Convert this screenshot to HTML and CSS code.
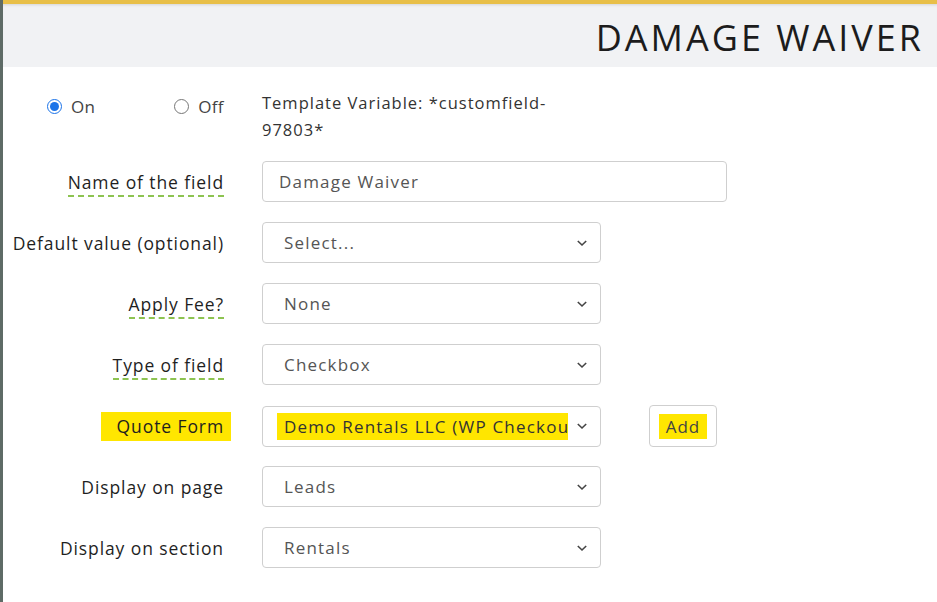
FILE: index.html
```html
<!DOCTYPE html>
<html>
<head>
  <meta charset="UTF-8">
  <title>Damage Waiver</title>
  <link rel="stylesheet" href="styles.css">
</head>
<body>
  <div class="page">
    <div class="topbar"></div>
    <div class="header">
      <h1>DAMAGE WAIVER</h1>
    </div>

    <div class="form">
      <div class="row row-top">
        <div class="status">
          <label class="radio"><input type="radio" name="status" checked> On</label>
          <label class="radio"><input type="radio" name="status"> Off</label>
        </div>
        <div class="template-var">Template Variable: *customfield-97803*</div>
      </div>

      <div class="row">
        <div class="label"><span class="hint">Name of the field</span></div>
        <div class="input wide">Damage Waiver</div>
      </div>

      <div class="row">
        <div class="label">Default value (optional)</div>
        <div class="select">
          <span class="value">Select...</span>
          <svg class="chevron" width="12" height="8" viewBox="0 0 12 8"><path d="M1.8 2 L6 6 L10.2 2" fill="none" stroke="#444" stroke-width="1.6"/></svg>
        </div>
      </div>

      <div class="row">
        <div class="label"><span class="hint">Apply Fee?</span></div>
        <div class="select">
          <span class="value">None</span>
          <svg class="chevron" width="12" height="8" viewBox="0 0 12 8"><path d="M1.8 2 L6 6 L10.2 2" fill="none" stroke="#444" stroke-width="1.6"/></svg>
        </div>
      </div>

      <div class="row">
        <div class="label"><span class="hint">Type of field</span></div>
        <div class="select">
          <span class="value">Checkbox</span>
          <svg class="chevron" width="12" height="8" viewBox="0 0 12 8"><path d="M1.8 2 L6 6 L10.2 2" fill="none" stroke="#444" stroke-width="1.6"/></svg>
        </div>
      </div>

      <div class="row">
        <div class="label"><span class="mark mark-label">Quote Form</span></div>
        <div class="control-group">
          <div class="select">
            <span class="value mark mark-value">Demo Rentals LLC (WP Checkout)</span>
            <svg class="chevron" width="12" height="8" viewBox="0 0 12 8"><path d="M1.8 2 L6 6 L10.2 2" fill="none" stroke="#444" stroke-width="1.6"/></svg>
          </div>
          <button class="btn-add"><span class="mark">Add</span></button>
        </div>
      </div>

      <div class="row">
        <div class="label">Display on page</div>
        <div class="select">
          <span class="value">Leads</span>
          <svg class="chevron" width="12" height="8" viewBox="0 0 12 8"><path d="M1.8 2 L6 6 L10.2 2" fill="none" stroke="#444" stroke-width="1.6"/></svg>
        </div>
      </div>

      <div class="row">
        <div class="label">Display on section</div>
        <div class="select">
          <span class="value">Rentals</span>
          <svg class="chevron" width="12" height="8" viewBox="0 0 12 8"><path d="M1.8 2 L6 6 L10.2 2" fill="none" stroke="#444" stroke-width="1.6"/></svg>
        </div>
      </div>
    </div>
  </div>
</body>
</html>
```

FILE: styles.css
```css
* {
  margin: 0;
  padding: 0;
  box-sizing: border-box;
}

body {
  font-family: "Open Sans", "Noto Sans", Arial, sans-serif;
  background: white;
  color: #222;
  height: 100vh;
  overflow: hidden;
}

.page {
  height: 100vh;
  border-left: 3px solid #5e6b66;
}

.topbar {
  height: 4px;
  background: #e8bf48;
}

.header {
  background: #f1f2f4;
  height: 63px;
  display: flex;
  justify-content: flex-end;
  align-items: center;
  padding-right: 13px;
  box-shadow: inset 0 3px 3px -2px rgba(0,0,0,0.12);
}

.header h1 {
  font-size: 36px;
  font-weight: 500;
  color: #1c1c1c;
  letter-spacing: 3px;
  margin-top: 4px;
}

.form {
  padding-top: 22px;
  display: flex;
  flex-direction: column;
  gap: 20px;
}

.row {
  display: grid;
  grid-template-columns: 221px auto;
  column-gap: 38px;
  align-items: center;
  height: 41px;
}

.row-top {
  height: auto;
  align-items: start;
  margin-bottom: -2px;
}

.label {
  text-align: right;
  font-size: 17.5px;
  font-weight: 500;
  letter-spacing: 0.9px;
  color: #1f1f1f;
  white-space: nowrap;
}

.hint {
  border-bottom: 2px dashed #8dc351;
  padding-bottom: 1px;
}

/* Status radios */
.status {
  display: flex;
  justify-content: space-between;
  padding-left: 44px;
  padding-top: 6px;
}

.radio {
  display: flex;
  align-items: center;
  gap: 9px;
  font-size: 17px;
  letter-spacing: 0.4px;
  color: #444;
  font-weight: 400;
}

.radio input {
  width: 15px;
  height: 15px;
  margin: 0;
  accent-color: #1a73e8;
}

.template-var {
  width: 295px;
  font-size: 16.5px;
  letter-spacing: 1px;
  line-height: 27px;
  color: #333;
}

/* Inputs */
.input,
.select {
  height: 41px;
  border: 1px solid #cfcfcf;
  border-radius: 4px;
  display: flex;
  align-items: center;
  font-size: 17px;
  letter-spacing: 1.2px;
  color: #555;
  background: white;
}

.input.wide {
  width: 465px;
  padding-left: 16px;
}

.select {
  width: 339px;
  padding: 0 12px 0 21px;
  justify-content: space-between;
}

.select .value {
  white-space: nowrap;
  overflow: hidden;
}

.chevron {
  flex-shrink: 0;
  margin-left: 8px;
}

.control-group {
  display: flex;
  align-items: center;
  gap: 48px;
}

.btn-add {
  height: 42px;
  width: 68px;
  border: 1px solid #cfcfcf;
  border-radius: 4px;
  background: white;
  font-family: inherit;
  font-size: 17px;
  letter-spacing: 1px;
  color: #444;
  display: flex;
  align-items: center;
  justify-content: center;
}

.mark {
  background: #ffe600;
}

.mark-label {
  padding: 2px 7px 3px 16px;
  margin-right: -7px;
}

.mark-value {
  width: 292px;
  margin-left: -7px;
  padding: 2px 0 2px 7px;
  color: #333;
}

.btn-add .mark {
  padding: 1px 7px;
}
```
